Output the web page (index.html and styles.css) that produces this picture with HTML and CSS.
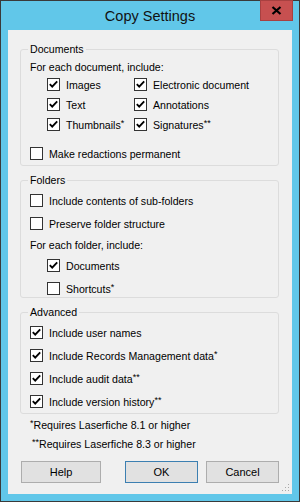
FILE: index.html
```html
<!DOCTYPE html>
<html lang="en">
<head>
    <meta charset="UTF-8">
    <title>Copy Settings</title>
    <link rel="stylesheet" href="styles.css">
</head>
<body>
    <div class="window">
        <div class="titlebar">
            <span class="title">Copy Settings</span>
            <span class="close-btn">
                <svg width="11" height="9" viewBox="0 0 11 9"><path d="M1.5 1 L9.5 8 M9.5 1 L1.5 8" stroke="#000" stroke-width="2.2"/></svg>
            </span>
        </div>

        <div class="client">
            <fieldset class="group">
                <legend>Documents</legend>
                <div class="note note-first">For each document, include:</div>
                <div class="doc-grid">
                    <div class="check"><span class="box on"><svg viewBox="0 0 11 11"><path d="M1.8 5.2 L4.2 7.6 L9.2 2.4"/></svg></span><span>Images</span></div>
                    <div class="check"><span class="box on"><svg viewBox="0 0 11 11"><path d="M1.8 5.2 L4.2 7.6 L9.2 2.4"/></svg></span><span>Electronic document</span></div>
                    <div class="check"><span class="box on"><svg viewBox="0 0 11 11"><path d="M1.8 5.2 L4.2 7.6 L9.2 2.4"/></svg></span><span>Text</span></div>
                    <div class="check"><span class="box on"><svg viewBox="0 0 11 11"><path d="M1.8 5.2 L4.2 7.6 L9.2 2.4"/></svg></span><span>Annotations</span></div>
                    <div class="check"><span class="box on"><svg viewBox="0 0 11 11"><path d="M1.8 5.2 L4.2 7.6 L9.2 2.4"/></svg></span><span>Thumbnails<sup>*</sup></span></div>
                    <div class="check"><span class="box on"><svg viewBox="0 0 11 11"><path d="M1.8 5.2 L4.2 7.6 L9.2 2.4"/></svg></span><span>Signatures<sup>**</sup></span></div>
                </div>
                <div class="check redact"><span class="box"></span><span>Make redactions permanent</span></div>
            </fieldset>

            <fieldset class="group group-next folders">
                <legend>Folders</legend>
                <div class="check first"><span class="box"></span><span>Include contents of sub-folders</span></div>
                <div class="check"><span class="box"></span><span>Preserve folder structure</span></div>
                <div class="note">For each folder, include:</div>
                <div class="check sub first-sub"><span class="box on"><svg viewBox="0 0 11 11"><path d="M1.8 5.2 L4.2 7.6 L9.2 2.4"/></svg></span><span>Documents</span></div>
                <div class="check sub"><span class="box"></span><span>Shortcuts<sup>*</sup></span></div>
            </fieldset>

            <fieldset class="group group-next advanced">
                <legend>Advanced</legend>
                <div class="check first"><span class="box on"><svg viewBox="0 0 11 11"><path d="M1.8 5.2 L4.2 7.6 L9.2 2.4"/></svg></span><span>Include user names</span></div>
                <div class="check"><span class="box on"><svg viewBox="0 0 11 11"><path d="M1.8 5.2 L4.2 7.6 L9.2 2.4"/></svg></span><span>Include Records Management data<sup>*</sup></span></div>
                <div class="check"><span class="box on"><svg viewBox="0 0 11 11"><path d="M1.8 5.2 L4.2 7.6 L9.2 2.4"/></svg></span><span>Include audit data<sup>**</sup></span></div>
                <div class="check"><span class="box on"><svg viewBox="0 0 11 11"><path d="M1.8 5.2 L4.2 7.6 L9.2 2.4"/></svg></span><span>Include version history<sup>**</sup></span></div>
            </fieldset>

            <p class="footnote fn-one"><sup>*</sup>Requires Laserfiche 8.1 or higher</p>
            <p class="footnote fn-two"><sup>**</sup>Requires Laserfiche 8.3 or higher</p>

            <div class="buttons">
                <button class="btn btn-help">Help</button>
                <button class="btn btn-default">OK</button>
                <button class="btn">Cancel</button>
            </div>

            <svg class="grip" width="9" height="9" viewBox="0 0 9 9">
                <rect x="7" y="1" width="1" height="1"/>
                <rect x="4" y="4" width="1" height="1"/><rect x="7" y="4" width="1" height="1"/>
                <rect x="1" y="7" width="1" height="1"/><rect x="4" y="7" width="1" height="1"/><rect x="7" y="7" width="1" height="1"/>
            </svg>
        </div>
    </div>
</body>
</html>
```

FILE: styles.css
```css
body {
    margin: 0;
    font-family: "Liberation Sans", Arial, sans-serif;
    font-size: 10.6px;
    color: #000;
}

.window {
    width: 300px;
    height: 502px;
    box-sizing: border-box;
    border: 1px solid #3a3a3a;
    background-color: #61c7e9;
    padding: 0 7px 7px;
    display: flex;
    flex-direction: column;
    position: relative;
}

.titlebar {
    height: 29px;
    display: flex;
    align-items: center;
    justify-content: center;
    flex-shrink: 0;
}

.title {
    font-size: 14.5px;
    color: #111;
}

.close-btn {
    position: absolute;
    top: -1px;
    right: 6px;
    width: 33px;
    height: 21px;
    box-sizing: border-box;
    background-color: #c75050;
    border: 1px solid #a84040;
    display: flex;
    align-items: center;
    justify-content: center;
}

.client {
    flex: 1;
    background-color: #f0f0f0;
    padding: 12px 13px 0 12px;
    display: flex;
    flex-direction: column;
    position: relative;
}

.group {
    margin: 0;
    padding: 0 9px 3px;
    border: 1px solid #dcdcdc;
    border-radius: 3px;
    min-width: 0;
}

.group legend {
    padding: 0 2px;
    margin-left: -2px;
    height: 14px;
    line-height: 14px;
}

.group-next {
    margin-top: 7px;
}

.note {
    height: 13px;
    line-height: 13px;
    margin-top: 7px;
}

.note-first {
    margin-top: 5px;
}

.doc-grid {
    display: grid;
    grid-template-columns: 87px auto;
    row-gap: 3px;
    margin-top: 2px;
    padding-left: 17px;
}

.check {
    height: 17px;
    display: flex;
    align-items: center;
    gap: 6px;
    white-space: nowrap;
}

.folders .check,
.advanced .check {
    margin-top: 6px;
}

.folders .check.first,
.advanced .check.first {
    margin-top: 5px;
}

.folders .check.first-sub {
    margin-top: 5px;
}

.folders {
    padding-bottom: 0;
}

.check.sub {
    padding-left: 17px;
}

.redact {
    margin-top: 12px;
}

sup {
    font-size: 9px;
    vertical-align: 3px;
    line-height: 0;
}

.box {
    width: 13px;
    height: 13px;
    box-sizing: border-box;
    border: 1px solid #333;
    background-color: #fff;
    flex-shrink: 0;
    display: flex;
}

.box svg {
    width: 11px;
    height: 11px;
}

.box path {
    fill: none;
    stroke: #000;
    stroke-width: 1.9;
}

.footnote {
    margin: 0;
    height: 13px;
    line-height: 13px;
}

.fn-one {
    margin-top: 5px;
    padding-left: 10px;
}

.fn-two {
    margin-top: 6px;
    padding-left: 12px;
}

.buttons {
    display: flex;
    gap: 8px;
    margin-top: 10px;
}

.btn {
    height: 22px;
    width: 73px;
    padding: 0;
    font-family: "Liberation Sans", Arial, sans-serif;
    font-size: 11px;
    color: #000;
    background-color: #e1e1e1;
    border: 1px solid #adadad;
    border-radius: 0;
}

.btn-help {
    width: 80px;
    margin-left: 1px;
    margin-right: auto;
}

.btn-default {
    border-color: #3c7fb1;
}

.grip {
    position: absolute;
    right: 2px;
    bottom: 2px;
    fill: #a8a8a8;
}
```
